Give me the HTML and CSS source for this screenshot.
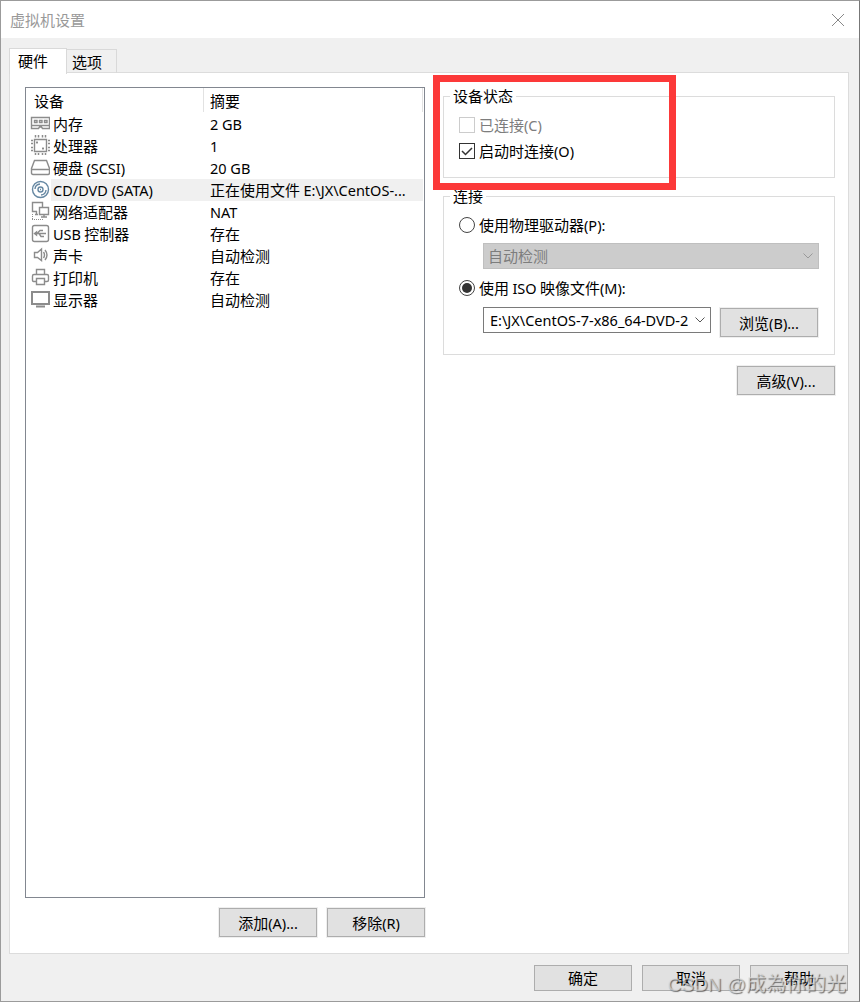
FILE: index.html
```html
<!DOCTYPE html>
<html lang="zh-CN">
<head>
<meta charset="utf-8">
<title>虚拟机设置</title>
<link rel="stylesheet" href="styles.css">
</head>
<body>
<div class="window">
  <header class="titlebar">
    <span>虚拟机设置</span>
    <svg class="close" width="14" height="14" viewBox="0 0 14 14"><path d="M1 1L13 13M13 1L1 13"/></svg>
  </header>
  <nav class="tabs"><div class="tab active">硬件</div><div class="tab">选项</div></nav>
  <main class="panel">
    <section class="devices">
      <div class="list">
        <div class="head"><div class="name">设备</div><div class="summary">摘要</div></div>
        <div class="row"><svg class="icon" viewBox="0 0 20 20"><path d="M1.5 4.500H19.500V15.500H12.500L11.500 14H9.500L8.500 15.500H1.500ZM1.500 12.500H19.500"/><path d="M4.500 7.500H7V9.500H4.500ZM9.500 7.500H12V9.500H9.500ZM14.500 7.500H17V9.500H14.500Z"/></svg><div class="name">内存</div><div class="summary"><i>2 GB</i></div></div>
        <div class="row"><svg class="icon" viewBox="0 0 20 20"><path d="M4.500 4.500H16.500V16.500H4.500Z"/><path class="pins" d="M5.500 0V2.500M8.500 0V2.500M12.500 0V2.500M15.500 0V2.500M5.500 18V20M8.500 18V20M12.500 18V20M15.500 18V20M1 5.500H3M1 8.500H3M1 12.500H3M1 15.500H3M18 5.500H20M18 8.500H20M18 12.500H20M18 15.500H20"/><path d="M6 7.500H8M7 6.500V8.500M12 13.500H14M13 12.500V14.500"/></svg><div class="name">处理器</div><div class="summary"><i>1</i></div></div>
        <div class="row"><svg class="icon" viewBox="0 0 20 20"><path d="M4.500 3.500H16.500L19.500 11.500V15.500Q19.500 17.500 18 17.500H3Q1.500 17.500 1.500 16V11.500ZM1.500 12.500H19.500"/></svg><div class="name">硬盘 <i>(SCSI)</i></div><div class="summary"><i>20 GB</i></div></div>
        <div class="row selected"><svg class="icon disc" viewBox="0 0 20 20"><circle cx="10.500" cy="10.500" r="8"/><circle cx="10.500" cy="10.500" r="2.500"/><path d="M5 10A5.500 5.500 0 0 1 10 5M11 16A5.500 5.500 0 0 0 16 11M10 10.500H11"/></svg><div class="name"><i>CD/DVD (SATA)</i></div><div class="summary">正在使用文件 <i class="path">E:\JX\CentOS-...</i></div></div>
        <div class="row"><svg class="icon" viewBox="0 0 20 20"><path d="M7 10.500H2.500V1.500H12.500V6M5 13.500H8M6.500 10V13"/><path d="M9.500 6.500H18.500V13.500H9.500ZM14 14V15.500M11 16H17"/><path class="dots" d="M2.500 13V18M2 18.500H14"/></svg><div class="name">网络适配器</div><div class="summary"><i>NAT</i></div></div>
        <div class="row"><svg class="icon" viewBox="0 0 20 20"><rect x="2.500" y="2.500" width="16" height="16" rx="2"/><path d="M5 10.500H16M7 10.500L10 7.500H13M9 10.500L11 13.500H14"/><path d="M4.500 10.500L6.500 9V12Z"/></svg><div class="name"><i>USB</i> 控制器</div><div class="summary">存在</div></div>
        <div class="row"><svg class="icon" viewBox="0 0 20 20"><path d="M4.500 7.500H7.500L11.500 4V15.500L7.500 12.500H4.500ZM13.500 7Q15.500 10 13.500 13M15 5Q19 10 15 15"/></svg><div class="name">声卡</div><div class="summary">自动检测</div></div>
        <div class="row"><svg class="icon" viewBox="0 0 20 20"><path d="M6.500 7V2.500H14.500V7M6 14.500H3.500Q2.500 14.500 2.500 13V9Q2.500 7.500 4 7.500H17Q18.500 7.500 18.500 9V13Q18.500 14.500 17 14.500H15M6.500 11.500H14.500V17.500H6.500Z"/></svg><div class="name">打印机</div><div class="summary">存在</div></div>
        <div class="row"><svg class="icon" viewBox="0 0 20 20"><path class="screen" d="M2 3H19V15H2ZM6 17.500H15"/></svg><div class="name">显示器</div><div class="summary">自动检测</div></div>
      </div>
      <div class="actions"><button class="btn">添加<i>(A)...</i></button><button class="btn">移除<i>(R)</i></button></div>
    </section>
    <section class="settings">
      <div class="group status">
        <div class="legend">设备状态</div>
        <label class="opt disabled"><span class="check"></span><span>已连接<i>(C)</i></span></label>
        <label class="opt"><span class="check"><svg width="14" height="14" viewBox="0 0 14 14"><path d="M2 7L5.500 10.500L12 4"/></svg></span><span>启动时连接<i>(O)</i></span></label>
        <div class="highlight"></div>
      </div>
      <div class="group connection">
        <div class="legend">连接</div>
        <label class="opt"><span class="radio"></span><span>使用物理驱动器<i>(P):</i></span></label>
        <div class="combo off"><span>自动检测</span><svg width="10" height="6" viewBox="0 0 10 6"><path d="M.5 .5L5 5L9.500 .5"/></svg></div>
        <label class="opt second"><span class="radio on"></span><span>使用 <i>ISO</i> 映像文件<i>(M):</i></span></label>
        <div class="file"><div class="combo"><span><i class="long">E:\JX\CentOS-7-x86_64-DVD-2009.iso</i></span><svg width="10" height="6" viewBox="0 0 10 6"><path d="M.5 .5L5 5L9.500 .5"/></svg></div><button class="btn">浏览<i>(B)...</i></button></div>
      </div>
      <button class="btn advanced">高级<i>(V)...</i></button>
    </section>
  </main>
  <footer class="footer"><button class="btn">确定</button><button class="btn">取消</button><button class="btn">帮助</button></footer>
  <div class="watermark"><span>CSDN @</span>成為你的光</div>
</div>
</body>
</html>
```
FILE: styles.css
```css
* { box-sizing: border-box; }
body { margin: 0; font: 15px/22px "Noto Sans CJK SC", sans-serif; color: #000; }
i { font-family: "Noto Sans", sans-serif; font-style: normal; font-size: 14.5px; line-height: 1; }
.window { position: relative; width: 860px; height: 1002px; background: #f0f0f0; border: 1px solid #9b9b9b; border-right-color: #777; overflow: hidden; }
.titlebar { height: 37px; padding: 0 14px 0 9px; display: flex; align-items: center; justify-content: space-between; background: #fff; color: #999; }
.close, .combo svg { fill: none; stroke: #888; }
.tabs { display: flex; align-items: flex-end; height: 35px; padding-left: 8px; }
.tab { height: 24px; width: 50px; padding-left: 5px; border: 1px solid #d9d9d9; border-left: 0; border-bottom: 0; line-height: 23px; }
.tab.active { position: relative; z-index: 1; height: 26px; width: 58px; padding-left: 8px; margin-bottom: -1px; background: #fff; border-left: 1px solid #d9d9d9; }
.panel { height: 882px; width: 840px; margin: -1px 0 0 8px; padding: 14px 13px 0 15px; background: #fff; border: 1px solid #dcdcdc; display: flex; justify-content: space-between; }
.tabs + .panel { margin-top: -1px; }
.devices { width: 400px; }
.list { height: 811px; border: 1px solid #828790; white-space: nowrap; }
.head { display: flex; height: 25px; line-height: 26px; padding-left: 8px; }
.head .name { width: 170px; height: 24px; border-right: 1px solid #e2e2e2; }
.head .summary { width: 219px; height: 24px; border-right: 1px solid #e2e2e2; }
.summary { padding-left: 6px; }
.row { display: flex; height: 22px; padding-left: 4px; }
.icon { width: 20px; height: 20px; margin-right: 1px; flex: none; fill: none; stroke: #8c8c8c; stroke-width: 1.4; }
.icon .pins { stroke-width: 1.500; }
.icon .dots { stroke-width: 1; stroke-dasharray: 1 1; }
.icon .screen { stroke-width: 2; }
.icon.disc { stroke: #6688a3; }
.row .name { width: 153px; padding-left: 2px; }
.row .summary { width: 219px; overflow: hidden; }
.selected .name, .selected .summary { background: #f0f0f0; }
.actions { display: flex; justify-content: flex-end; gap: 10px; margin-top: 10px; }
.btn { width: 98px; height: 29px; padding: 0; background: #e1e1e1; border: 1px solid #adadad; outline: 1px solid #efefef; font: inherit; color: #000; line-height: 26px; white-space: nowrap; }
.settings { width: 392px; display: flex; flex-direction: column; margin-right: 0; }
.group { position: relative; border: 1px solid #dcdcdc; padding-left: 15px; }
.status { height: 82px; margin-top: 9px; }
.connection { height: 159px; margin-top: 18px; }
.legend { width: max-content; height: 22px; margin: -12px 0 0 -9px; padding: 0 3px; background: #fff; }
.opt { display: flex; gap: 4px; height: 26px; align-items: center; }
.status .legend + .opt { margin-top: 5px; }
.connection .legend + .opt { margin-top: 5px; }
.disabled { color: #7d7d7d; }
.check { width: 16px; height: 16px; border: 1px solid #333; display: flex; background: #fff; }
.check svg { fill: none; stroke: #333; stroke-width: 1.500; }
.disabled .check { border-color: #ccc; }
.radio { width: 16px; height: 16px; border: 1px solid #444; border-radius: 50%; padding: 2px; background: #fff; }
.radio.on::after { content: ""; display: block; width: 10px; height: 10px; border-radius: 50%; background: #333; }
.highlight { position: absolute; left: -11px; top: -22px; width: 243px; height: 115px; border: 7px solid #fc3939; z-index: 2; }
.combo { width: 228px; height: 26px; border: 1px solid #7a7a7a; display: flex; align-items: center; justify-content: space-between; padding: 0 5px 0 6px; white-space: nowrap; }
.combo span { overflow: hidden; width: 198px; line-height: 22px; }
.combo svg { stroke: #555; }
.combo.off { width: 336px; margin: 5px 0 0 24px; padding-left: 4px; background: #ccc; border-color: #bfbfbf; color: #7d7d7d; }
.combo.off svg { stroke: #999; }
.opt.second { margin-top: 6px; }
.file { display: flex; gap: 9px; margin: 6px 0 0 24px; }
.file .btn { margin-top: 1px; }
.advanced { align-self: flex-end; margin: 11px 0 0; }
.footer { display: flex; gap: 10px; justify-content: flex-end; padding: 11px 11px 0 0; }
.footer .btn { height: 26px; line-height: 24px; outline: 0; }
.watermark { position: absolute; right: 13px; top: 967px; font-size: 20px; line-height: 30px; color: rgba(225,225,225,.65); text-shadow: 1px 1px 1px rgba(70,70,70,.75); white-space: nowrap; }
.watermark span { font-family: "Liberation Sans", sans-serif; font-size: 19px; }
```
